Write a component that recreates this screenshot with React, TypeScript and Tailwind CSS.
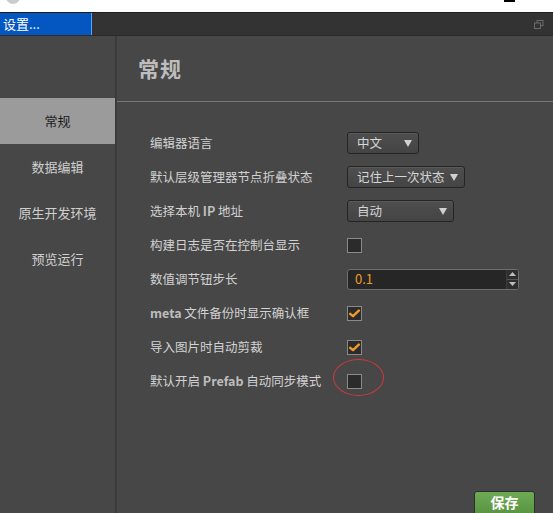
import React from "react";

const font = { fontFamily: '"Noto Sans CJK SC", "Noto Sans", sans-serif' };

const sideItems = ["常规", "数据编辑", "原生开发环境", "预览运行"];

function Select({ value, width }: { value: string; width: string }) {
  return (
    <div
      className={`${width} h-[22px] flex items-center justify-between gap-[4px] pl-[9px] pr-[6px] rounded-[3px] border border-[#242424] bg-gradient-to-b from-[#4e4e4e] to-[#444444] shadow-[inset_0_1px_0_#5a5a5a] text-[12.5px] text-[#d6d6d6]`}
    >
      <span className="whitespace-nowrap">{value}</span>
      <svg width="8" height="7" viewBox="0 0 8 7" className="shrink-0">
        <path d="M0 0 H8 L4 7 Z" fill="#d0d0d0" />
      </svg>
    </div>
  );
}

function Checkbox({ checked }: { checked?: boolean }) {
  return (
    <div className="w-[15px] h-[15px] border border-[#8a8a8a] bg-[#2b2b2b] flex items-center justify-center">
      {checked && (
        <svg width="11" height="9" viewBox="0 0 11 9">
          <path d="M1.2 4.8 L4 7.2 L9.8 1.6" stroke="#f39a2b" strokeWidth="2.4" fill="none" strokeLinecap="round" strokeLinejoin="round" />
        </svg>
      )}
    </div>
  );
}

function NumberInput({ value }: { value: string }) {
  return (
    <div className="w-[172px] h-[21px] flex rounded-[3px] border border-[#6e6e6e] bg-[#262626] overflow-hidden">
      <div className="flex-1 flex items-center pl-[7px] text-[13px] text-[#f09a2a]">{value}</div>
      <div className="w-[12px] flex flex-col border-l border-[#3c3c3c] bg-[#2e2e2e]">
        <div className="flex-1 flex items-center justify-center">
          <svg width="7" height="4" viewBox="0 0 7 4"><path d="M0 4 L3.5 0 L7 4 Z" fill="#bdbdbd" /></svg>
        </div>
        <div className="h-px bg-[#555]" />
        <div className="flex-1 flex items-center justify-center">
          <svg width="7" height="4" viewBox="0 0 7 4"><path d="M0 0 L7 0 L3.5 4 Z" fill="#bdbdbd" /></svg>
        </div>
      </div>
    </div>
  );
}

function Row({ label, children }: { label: React.ReactNode; children: React.ReactNode }) {
  return (
    <div className="h-[34px] flex items-center">
      <div className="w-[197px] text-[12.5px] text-[#d2d2d2] whitespace-nowrap">{label}</div>
      {children}
    </div>
  );
}

export default function App() {
  return (
    <div className="w-[553px] h-[513px] overflow-hidden flex flex-col bg-[#474747]" style={font}>
      {/* window title bar, mostly cut off */}
      <div className="h-[12px] bg-white overflow-hidden flex items-start pl-[6px] gap-[10px] shrink-0">
        <div className="w-[14px] h-[14px] -mt-[10px] rounded-full bg-[#ccc]" />
        <div className="-mt-[13px] text-[14px] text-black leading-[16px]" style={{ fontFamily: '"Liberation Sans", sans-serif' }}>
          Editor Window
        </div>
        <div className="ml-auto mr-[38px] w-[11px] h-[2px] bg-black" />
      </div>

      {/* tab bar */}
      <div className="h-[24px] shrink-0 flex bg-[#333333] border-t border-[#1e1e1e] border-b border-b-[#2a2a2a]">
        <div className="w-[92px] flex items-center pl-[3px] bg-[#0456c0] border-r border-[#4ea6ff] text-[13px] text-white">
          设置...
        </div>
        <div className="flex-1 flex items-center justify-end pr-[9px]">
          <svg width="10" height="9" viewBox="0 0 10 9">
            <rect x="3" y="0.5" width="6" height="5" fill="none" stroke="#6a6a6a" />
            <rect x="0.5" y="3" width="6" height="5.5" fill="#333" stroke="#6a6a6a" />
          </svg>
        </div>
      </div>

      <div className="flex-1 flex min-h-0">
        {/* sidebar */}
        <div className="w-[115px] shrink-0 pt-[62px] bg-[#474747]">
          {sideItems.map((item, i) => (
            <div
              key={item}
              className={`h-[46px] flex items-center justify-center text-[13px] ${
                i === 0 ? "bg-[#9b9b9b] text-[#1c1c1c]" : "text-[#cfcfcf]"
              }`}
            >
              {item}
            </div>
          ))}
        </div>
        <div className="w-[2px] shrink-0 bg-gradient-to-r from-[#363636] to-[#404040]" />

        {/* main */}
        <div className="flex-1 flex flex-col relative">
          <div className="h-[66px] flex items-center pl-[21px] border-b border-[#767676] shrink-0">
            <span className="text-[21px] font-bold text-[#bdbdbd] tracking-[1px]">常规</span>
          </div>
          <div className="pt-[24px] pl-[33px] flex flex-col">
            <Row label="编辑器语言">
              <Select value="中文" width="w-[72px]" />
            </Row>
            <Row label="默认层级管理器节点折叠状态">
              <Select value="记住上一次状态" width="w-[118px]" />
            </Row>
            <Row label={<>选择本机 <b className="text-[#bdbdbd]">IP</b> 地址</>}>
              <Select value="自动" width="w-[107px]" />
            </Row>
            <Row label="构建日志是否在控制台显示">
              <Checkbox />
            </Row>
            <Row label="数值调节钮步长">
              <NumberInput value="0.1" />
            </Row>
            <Row label={<><b className="text-[#bdbdbd]">meta</b> 文件备份时显示确认框</>}>
              <Checkbox checked />
            </Row>
            <Row label="导入图片时自动剪裁">
              <Checkbox checked />
            </Row>
            <Row label={<>默认开启 <b className="text-[#bdbdbd]">Prefab</b> 自动同步模式</>}>
              <div className="relative">
                <Checkbox />
                <div className="absolute left-[-14px] top-[-15px] w-[51px] h-[37px] rounded-[50%] border border-[#d23a3a]" />
              </div>
            </Row>
          </div>
          <div className="mt-auto flex justify-end pr-[18px]">
            <div className="w-[61px] h-[23px] -mb-[1px] rounded-t-[3px] border border-[#2e2e2e] bg-gradient-to-b from-[#6fab55] to-[#5a9543] flex items-center justify-center text-[14px] font-bold text-white">
              保存
            </div>
          </div>
        </div>
      </div>
    </div>
  );
}
